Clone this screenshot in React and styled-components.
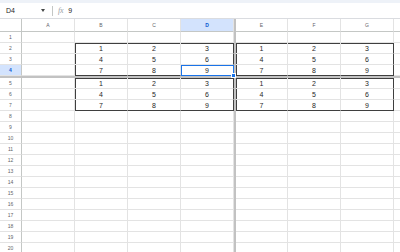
import React from "react";
import styled, { createGlobalStyle, css } from "styled-components";

const GlobalStyle = createGlobalStyle`
	html, body {
		margin: 0;
		padding: 0;
		background: #ffffff;
	}
	body {
		font-family: "Liberation Sans", Arial, sans-serif;
	}
`;

const DARK = "#3f3f3f";
const BLUE = "#1a73e8";
const GRID = "#e3e3e3";
const FREEZE = "#c2c2c2";

const Page = styled.div`
	width: 400px;
	height: 252px;
	overflow: hidden;
	display: flex;
	flex-direction: column;
	background: #ffffff;
`;

const TopStrip = styled.div`
	height: 3px;
	flex: none;
	background: #eef2f8;
`;

const FormulaBar = styled.div`
	height: 16px;
	flex: none;
	display: flex;
	align-items: center;
	box-sizing: border-box;
	border-bottom: 1px solid #dadce0;
	font-size: 7px;
	color: #1f1f1f;
`;

const NameBox = styled.div`
	width: 48px;
	padding-left: 6px;
	display: flex;
	align-items: center;
	justify-content: space-between;
	box-sizing: border-box;
	padding-right: 3px;
`;

const Caret = styled.span`
	width: 0;
	height: 0;
	border-left: 2.5px solid transparent;
	border-right: 2.5px solid transparent;
	border-top: 3px solid #444746;
`;

const Divider = styled.div`
	width: 1px;
	height: 10px;
	background: #c4c7c5;
	margin: 0 5px 0 4px;
`;

const Fx = styled.span`
	font-family: "Liberation Serif", serif;
	font-style: italic;
	color: #9aa0a6;
	font-size: 8px;
	margin-right: 5px;
	letter-spacing: -0.3px;
`;

const Sheet = styled.div`
	display: grid;
	grid-template-columns: 22px 53px 53px 53px 53px 2px 52px 53px 53px 53px;
	grid-template-rows: 13px repeat(4, 11px) 2px repeat(16, 11px);
	overflow: hidden;
	flex: 1;
`;

const Head = styled.div`
	box-sizing: border-box;
	display: flex;
	align-items: center;
	justify-content: center;
	font-size: 5px;
	color: #5f6368;
	border-right: 1px solid ${({ $corner }) => ($corner ? "#c4c7c5" : GRID)};
	border-bottom: 1px solid #c4c7c5;
	background: ${({ $active }) => ($active ? "#d3e3fd" : "#ffffff")};
	${({ $active }) =>
		$active &&
		css`
			color: #0b57d0;
			font-weight: bold;
		`}
`;

const RowHead = styled(Head)`
	border-right: 1px solid #c4c7c5;
	border-bottom: 1px solid ${GRID};
`;

const FreezeCol = styled.div`
	background: ${FREEZE};
`;

const FreezeRow = styled.div`
	grid-column: 1 / -1;
	background: ${FREEZE};
`;

const edgeShadow = ({ $top, $left, $selected }) => {
	const color = $selected ? BLUE : DARK;
	const list = [];
	if ($top || $selected) list.push(`inset 0 1px 0 ${color}`);
	if ($left || $selected) list.push(`inset 1px 0 0 ${color}`);
	return list.length ? `box-shadow: ${list.join(", ")};` : "";
};

const Cell = styled.div`
	position: relative;
	box-sizing: border-box;
	display: flex;
	align-items: center;
	justify-content: center;
	font-size: 7px;
	color: #1f1f1f;
	border-right: 1px solid
		${({ $right, $selected }) => ($selected ? BLUE : $right ? DARK : GRID)};
	border-bottom: 1px solid
		${({ $bottom, $selected }) => ($selected ? BLUE : $bottom ? DARK : GRID)};
	${edgeShadow}
	${({ $selected }) =>
		$selected &&
		css`
			z-index: 1;
			&::after {
				content: "";
				position: absolute;
				right: -3px;
				bottom: -3px;
				width: 3px;
				height: 3px;
				background: ${BLUE};
				border: 1px solid #ffffff;
			}
		`}
`;

const LEFT_COLS = ["A", "B", "C", "D"];
const RIGHT_COLS = ["E", "F", "G"];

// two 3x3 blocks side by side, repeated on rows 2-4 and 5-7
const blockValue = (col, row) => {
	const blockCols = { B: 0, C: 1, D: 2, E: 0, F: 1, G: 2 };
	if (!(col in blockCols)) return null;
	let r;
	if (row >= 2 && row <= 4) r = row - 2;
	else if (row >= 5 && row <= 7) r = row - 5;
	else return null;
	return r * 3 + blockCols[col] + 1;
};

const edgesFor = (col, row) => {
	const value = blockValue(col, row);
	if (value === null) return {};
	const firstRow = row === 2 || row === 5;
	const lastRow = row === 4 || row === 7;
	return {
		$top: firstRow,
		$bottom: lastRow,
		$left: col === "B" || col === "E",
		$right: col === "D" || col === "G",
	};
};

const renderCell = (col, row) => (
	<Cell key={col + row} {...edgesFor(col, row)} $selected={col === "D" && row === 4}>
		{blockValue(col, row)}
	</Cell>
);

const renderRow = (row) => (
	<React.Fragment key={row}>
		<RowHead $active={row === 4}>{row}</RowHead>
		{LEFT_COLS.map((c) => renderCell(c, row))}
		<FreezeCol />
		{RIGHT_COLS.map((c) => renderCell(c, row))}
		<Cell />
	</React.Fragment>
);

const rows = Array.from({ length: 20 }, (_, i) => i + 1);

const App = () => (
	<>
		<GlobalStyle />
		<Page>
			<TopStrip />
			<FormulaBar>
				<NameBox>
					<span>D4</span>
					<Caret />
				</NameBox>
				<Divider />
				<Fx>fx</Fx>
				<span>9</span>
			</FormulaBar>
			<Sheet>
				<Head $corner />
				{LEFT_COLS.map((c) => (
					<Head key={c} $active={c === "D"}>
						{c}
					</Head>
				))}
				<FreezeCol />
				{RIGHT_COLS.map((c) => (
					<Head key={c}>{c}</Head>
				))}
				{/* column H is cut off by the window edge; its letter is not in view */}
				<Head />
				{rows.slice(0, 4).map(renderRow)}
				<FreezeRow />
				{rows.slice(4).map(renderRow)}
			</Sheet>
		</Page>
	</>
);

export default App;
